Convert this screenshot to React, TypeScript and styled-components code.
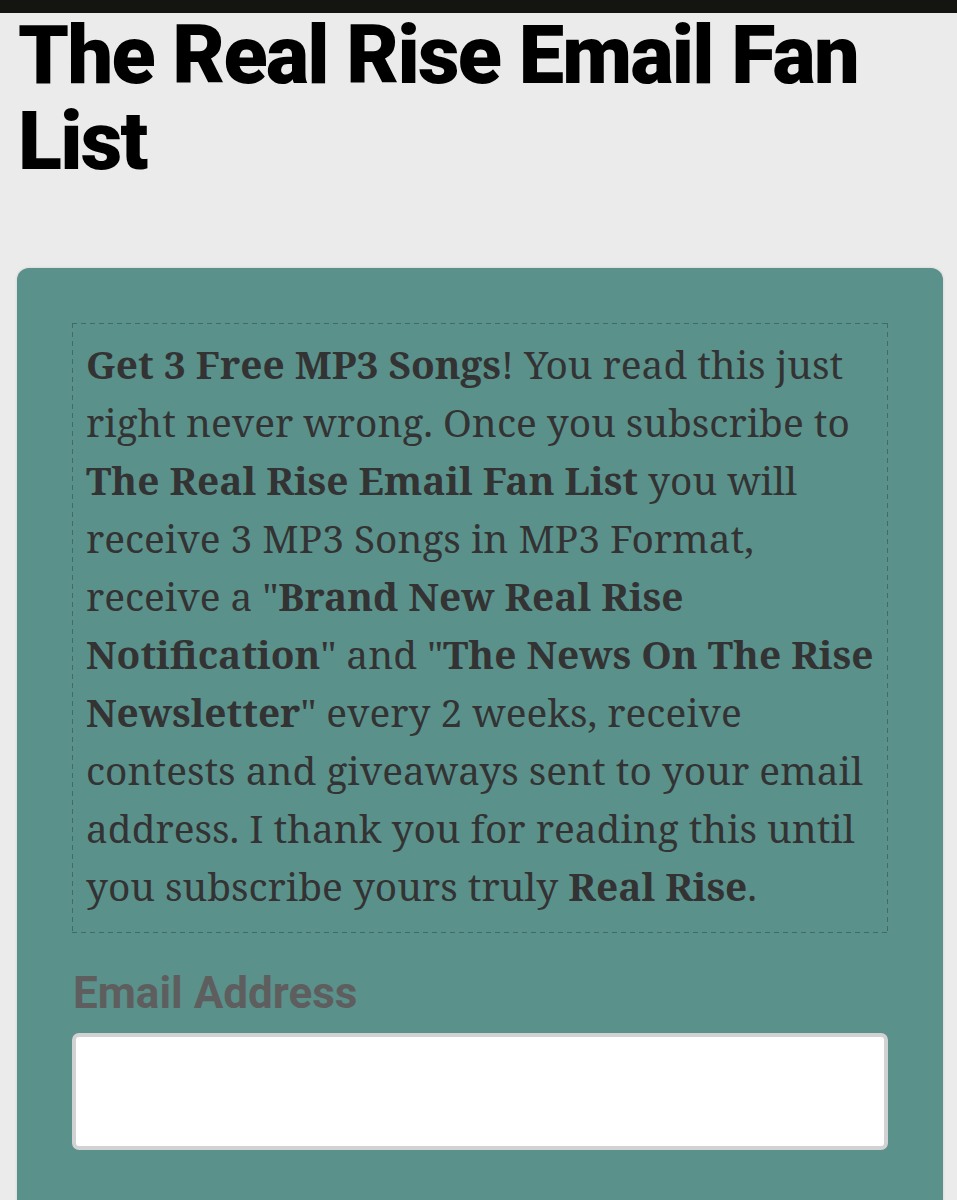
import React from "react";
import styled, { createGlobalStyle } from "styled-components";

const Global = createGlobalStyle`
  html, body { margin: 0; padding: 0; background: #ebebeb; }
  body { font-family: "Roboto", "Liberation Sans", sans-serif; }
`;

const TopBar = styled.div`
  height: 13px;
  background: #141410;
`;

const Page = styled.main`
  padding: 0 14px 0 17px;
`;

const Title = styled.h1`
  margin: 0;
  padding: 0 0 0 1px;
  font-family: "Roboto", "Liberation Sans", sans-serif;
  font-weight: 900;
  font-size: 81px;
  line-height: 86px;
  letter-spacing: -1.7px;
  color: #000;
`;

const Card = styled.section`
  margin-top: 83px;
  background: #5b918b;
  border-radius: 12px;
  padding: 55px 55px 80px;
  box-shadow: 0 0 3px rgba(0, 0, 0, 0.12);
`;

const dash = "#3f6a65";

const Intro = styled.div`
  padding: 12px 14px 18px;
  background-image:
    repeating-linear-gradient(90deg, ${dash} 0 5px, transparent 5px 9px),
    repeating-linear-gradient(90deg, ${dash} 0 5px, transparent 5px 9px),
    repeating-linear-gradient(180deg, ${dash} 0 5px, transparent 5px 9px),
    repeating-linear-gradient(180deg, ${dash} 0 5px, transparent 5px 9px);
  background-size: 100% 1px, 100% 1px, 1px 100%, 1px 100%;
  background-position: left top, left bottom, left top, right top;
  background-repeat: no-repeat;
  font-family: "Noto Serif", "DejaVu Serif", serif;
  font-size: 38.8px;
  line-height: 58px;
  color: #333333;
`;

const Label = styled.label`
  display: block;
  margin-top: 32px;
  font-family: "Roboto", "Liberation Sans", sans-serif;
  font-weight: 700;
  font-size: 44px;
  line-height: 56px;
  color: #5e5e5e;
  padding-left: 1px;
`;

const Input = styled.input`
  display: block;
  box-sizing: border-box;
  width: 100%;
  height: 117px;
  margin-top: 12px;
  background: #fff;
  border: 4px solid #d2d2d2;
  border-radius: 7px;
  outline: none;
`;

export default function App() {
  return (
    <>
      <Global />
      <TopBar />
      <Page>
        <Title>The Real Rise Email Fan List</Title>
        <Card>
          <Intro>
            <b>Get 3 Free MP3 Songs</b>! You read this just right never wrong. Once you subscribe to{" "}
            <b>The Real Rise Email Fan List</b> you will receive 3 MP3 Songs in MP3 Format, receive a "
            <b>Brand New Real Rise Notification</b>" and "<b>The News On The Rise Newsletter</b>" every 2
            weeks, receive contests and giveaways sent to your email address. I thank you for reading this
            until you subscribe yours truly <b>Real Rise</b>.
          </Intro>
          <Label htmlFor="email">Email Address</Label>
          <Input id="email" type="email" />
        </Card>
      </Page>
    </>
  );
}
